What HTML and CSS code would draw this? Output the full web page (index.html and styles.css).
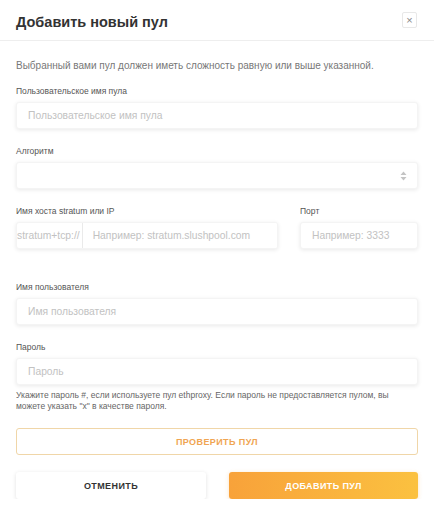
FILE: index.html
```html
<!DOCTYPE html>
<html lang="ru">
<head>
  <meta charset="UTF-8">
  <meta name="viewport" content="width=device-width, initial-scale=1.0">
  <title>Добавить новый пул</title>
  <link rel="stylesheet" href="styles.css">
</head>
<body>
  <div class="modal">
    <div class="modal-header">
      <h2>Добавить новый пул</h2>
      <button class="close-btn" aria-label="Закрыть">&times;</button>
    </div>

    <div class="modal-body">
      <p class="intro">Выбранный вами пул должен иметь сложность равную или выше указанной.</p>

      <div class="form-group">
        <label for="pool-name">Пользовательское имя пула</label>
        <input type="text" id="pool-name" placeholder="Пользовательское имя пула">
      </div>

      <div class="form-group">
        <label for="algo">Алгоритм</label>
        <div class="select">
          <span class="arrows">
            <svg width="7" height="10" viewBox="0 0 7 10"><path d="M3.5 0.5 L6.5 4 H0.5 Z M3.5 9.5 L6.5 6 H0.5 Z" fill="#c4c4c4"/></svg>
          </span>
        </div>
      </div>

      <div class="form-row">
        <div class="form-group host">
          <label for="host">Имя хоста stratum или IP</label>
          <div class="input-prefix">
            <span class="prefix">stratum+tcp://</span>
            <input type="text" id="host" placeholder="Например: stratum.slushpool.com">
          </div>
        </div>
        <div class="form-group port">
          <label for="port">Порт</label>
          <input type="text" id="port" placeholder="Например: 3333">
        </div>
      </div>

      <div class="form-group spaced">
        <label for="user">Имя пользователя</label>
        <input type="text" id="user" placeholder="Имя пользователя">
      </div>

      <div class="form-group">
        <label for="pass">Пароль</label>
        <input type="text" id="pass" placeholder="Пароль">
        <p class="hint">Укажите пароль #, если используете пул ethproxy. Если пароль не предоставляется пулом, вы можете указать "x" в качестве пароля.</p>
      </div>

      <button class="btn btn-outline">Проверить пул</button>

      <div class="actions">
        <button class="btn btn-light">Отменить</button>
        <button class="btn btn-primary">Добавить пул</button>
      </div>
    </div>
  </div>
</body>
</html>
```

FILE: styles.css
```css
* {
  box-sizing: border-box;
}
body {
  margin: 0;
  background: #fff;
  font-family: "Liberation Sans", Arial, sans-serif;
  color: #333;
}
.modal {
  width: 434px;
}
.modal-header {
  height: 41px;
  padding: 0 16px;
  display: flex;
  align-items: center;
  justify-content: space-between;
  border-bottom: 1px solid #eeeeee;
}
.modal-header h2 {
  margin: 0;
  font-size: 14.5px;
  font-weight: bold;
  color: #333;
  padding-top: 4px;
}
.close-btn {
  align-self: flex-start;
  width: 15px;
  height: 16px;
  padding: 0;
  margin-top: 12px;
  margin-right: 1px;
  border: 1px solid #e8e8e8;
  border-radius: 2px;
  background: #fff;
  color: #888;
  font-size: 11px;
  line-height: 13px;
  font-family: "Liberation Sans", Arial, sans-serif;
}
.modal-body {
  padding: 18px 16px 0;
}
.intro {
  margin: 0 0 13px;
  font-size: 10px;
  line-height: 14px;
  color: #777;
}
.form-group {
  margin-bottom: 17px;
}
.form-group.spaced {
  margin-top: 16px;
}
label {
  display: block;
  font-size: 8.5px;
  line-height: 11px;
  color: #555;
  margin-bottom: 5px;
}
input,
.select,
.input-prefix {
  display: block;
  width: 100%;
  height: 27px;
  border: 1px solid #f4f4f4;
  border-radius: 3px;
  background: #fff;
  box-shadow: 0 1px 4px rgba(0, 0, 0, 0.09);
  font-family: "Liberation Sans", Arial, sans-serif;
  font-size: 10.3px;
  color: #333;
  outline: none;
}
input {
  padding: 0 11px;
}
input::placeholder {
  color: #c2c2c2;
}
.select {
  position: relative;
}
.select .arrows {
  position: absolute;
  right: 10px;
  top: 8px;
  display: flex;
}
.form-row {
  display: flex;
  justify-content: space-between;
}
.host {
  width: 262px;
}
.port {
  width: 118px;
}
.input-prefix {
  display: flex;
  align-items: center;
  overflow: hidden;
}
.input-prefix .prefix {
  flex: none;
  height: 100%;
  display: flex;
  align-items: center;
  padding-right: 2px;
  border-right: 1px solid #eaeaea;
  color: #c2c2c2;
}
.input-prefix input {
  height: 100%;
  border: none;
  box-shadow: none;
  border-radius: 0;
  padding: 0 10px;
}
.hint {
  margin: 5px 0 0;
  font-size: 8.5px;
  line-height: 11px;
  color: #666;
}
.btn {
  display: block;
  height: 27px;
  border-radius: 3px;
  font-family: "Liberation Sans", Arial, sans-serif;
  font-size: 9px;
  font-weight: bold;
  letter-spacing: 0.4px;
  text-transform: uppercase;
  cursor: pointer;
}
.btn-outline {
  width: 100%;
  margin-top: -1px;
  background: #fff;
  border: 1px solid #f0d6a8;
  color: #f0a552;
}
.actions {
  display: flex;
  justify-content: space-between;
  margin-top: 17px;
}
.btn-light {
  width: 190px;
  border: none;
  background: #fff;
  color: #333;
  box-shadow: 0 1px 4px rgba(0, 0, 0, 0.12);
}
.btn-primary {
  width: 189px;
  border: none;
  color: #fff;
  background: linear-gradient(90deg, #f8a23a, #fbc140);
  box-shadow: 0 1px 4px rgba(240, 160, 60, 0.3);
}
```
